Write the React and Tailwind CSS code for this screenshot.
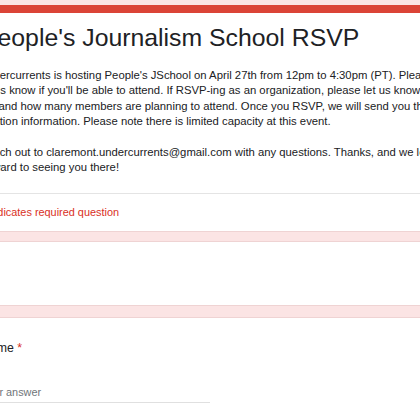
export default function App() {
  const descLines = [
    "Undercurrents is hosting People's JSchool on April 27th from 12pm to 4:30pm (PT). Please",
    "let us know if you'll be able to attend. If RSVP-ing as an organization, please let us know your",
    "org and how many members are planning to attend. Once you RSVP, we will send you the",
    "location information. Please note there is limited capacity at this event.",
  ];
  const reachLines = [
    "Reach out to claremont.undercurrents@gmail.com with any questions. Thanks, and we look",
    "forward to seeing you there!",
  ];

  return (
    <div className="h-[420px] w-[420px] overflow-hidden bg-[#fbe4e4] pt-[5px] font-['Liberation_Sans',Arial,sans-serif] text-[#202124]">
      <div className="-ml-[37px] w-[520px]">
        {/* header card */}
        <div className="border-t-8 border-[#db4437] bg-white pl-[18px]">
          <div className="pt-[10px] text-[24.8px] leading-[30px] whitespace-nowrap">
            People's Journalism School RSVP
          </div>
          <div className="mt-[15px] -ml-[2px] text-[11.3px] leading-[15.4px]">
            {descLines.map((line) => (
              <div key={line} className="whitespace-nowrap">{line}</div>
            ))}
            <div className="h-[15.4px]" />
            {reachLines.map((line) => (
              <div key={line} className="whitespace-nowrap">{line}</div>
            ))}
          </div>
          <div className="mt-[17px] -ml-[18px] border-t border-[#e4e4e4]" />
          <div className="flex h-[37px] items-center text-[10.9px] text-[#d93025]">
            * Indicates required question
          </div>
        </div>

        <div className="h-[10px] border-t border-[#efd3d3]" />

        {/* empty card */}
        <div className="h-[65px] border-y border-[#efd3d3] bg-white" />

        <div className="h-[11px]" />

        {/* name question */}
        <div className="h-[110px] border-t border-[#efd3d3] bg-white pl-[18px]">
          <div className="pt-[22px] text-[12.3px] leading-[16px]">
            Name <span className="text-[#d93025]">*</span>
          </div>
          <div className="mt-[29px] w-[229px] border-b border-[#e0e0e0] pb-[3px] text-[10.9px] leading-[14px] text-[#70757a]">
            Your answer
          </div>
        </div>
      </div>
    </div>
  );
}
